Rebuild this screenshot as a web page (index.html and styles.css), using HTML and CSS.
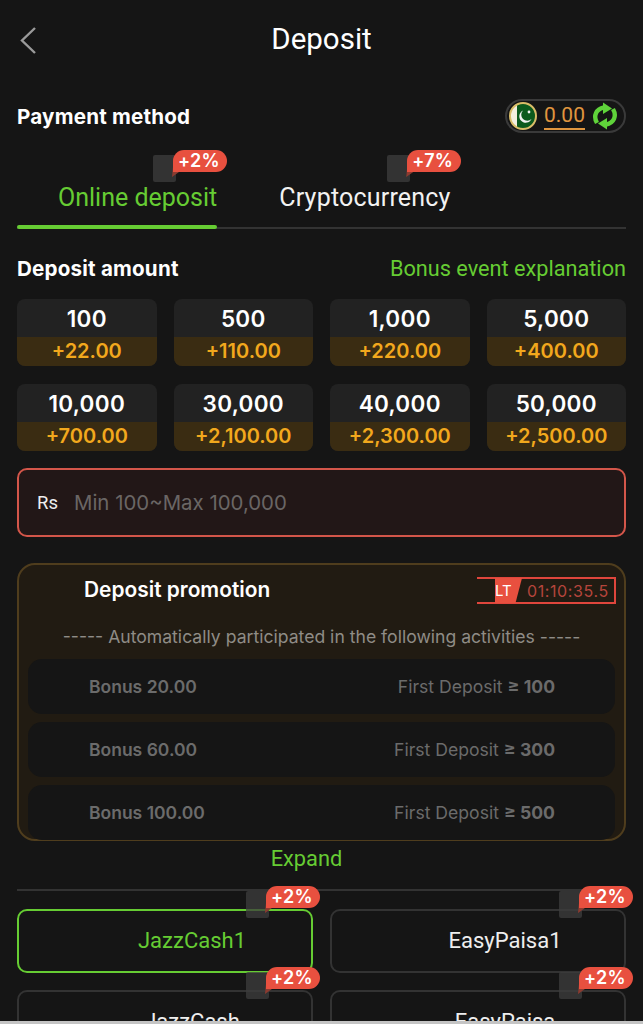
FILE: index.html
```html
<!DOCTYPE html>
<html lang="en">
<head>
  <meta charset="UTF-8">
  <meta name="viewport" content="width=device-width, initial-scale=1" />
  <title>Deposit</title>
  <link rel="stylesheet" href="styles.css">
</head>
<body>
<div id="page">
  <div id="header">
    <svg class="back-icon" width="20" height="30" viewBox="0 0 20 30"><path d="M17 3 L4 15.5 L17 28" fill="none" stroke="#9a9a9a" stroke-width="2.4"/></svg>
    <span class="header-title">Deposit</span>
  </div>

  <div class="row-between method-row">
    <span class="section-title">Payment method</span>
    <div class="balance">
      <svg class="flag" width="30" height="30" viewBox="0 0 30 30">
        <defs><clipPath id="flag-clip"><circle cx="15" cy="15" r="13"/></clipPath></defs>
        <g clip-path="url(#flag-clip)">
          <rect width="30" height="30" fill="#0c5a1d"/>
          <rect width="9" height="30" fill="#f3efdf"/>
        </g>
        <circle cx="15" cy="15" r="13" fill="none" stroke="#d9bd68" stroke-width="2"/>
        <path d="M15 9.5 A6.4 6.4 0 1 0 23.5 18 A5.6 5.6 0 0 1 15 9.5 Z" fill="#f2f2f2"/>
        <circle cx="21" cy="11" r="1.4" fill="#f2f2f2"/>
      </svg>
      <span class="balance-value">0.00</span>
      <svg class="refresh" width="26" height="28" viewBox="0 0 26 28">
        <path d="M5 21 C1 14 4 7 12 5.5" fill="none" stroke="#5fd33a" stroke-width="4.4"/>
        <path d="M11 0.5 L20 6.5 L11 12 Z" fill="#5fd33a"/>
        <path d="M21 7 C25 14 22 21 14 22.5" fill="none" stroke="#5fd33a" stroke-width="4.4"/>
        <path d="M15 16 L6 21.5 L15 27.5 Z" fill="#5fd33a"/>
      </svg>
    </div>
  </div>

  <div id="tabs">
    <div class="tab active">
      <span class="ribbon"><span class="ribbon-box"></span><span class="ribbon-fold"></span><span class="ribbon-tag">+2%</span></span>
      Online deposit
    </div>
    <div class="tab">
      <span class="ribbon"><span class="ribbon-box"></span><span class="ribbon-fold"></span><span class="ribbon-tag">+7%</span></span>
      Cryptocurrency
    </div>
  </div>

  <div class="row-between amount-row">
    <span class="section-title">Deposit amount</span>
    <span class="bonus-link">Bonus event explanation</span>
  </div>

  <div id="amounts">
    <div class="amount"><div class="amount-top">100</div><div class="amount-bonus">+22.00</div></div>
    <div class="amount"><div class="amount-top">500</div><div class="amount-bonus">+110.00</div></div>
    <div class="amount"><div class="amount-top">1,000</div><div class="amount-bonus">+220.00</div></div>
    <div class="amount"><div class="amount-top">5,000</div><div class="amount-bonus">+400.00</div></div>
    <div class="amount"><div class="amount-top">10,000</div><div class="amount-bonus">+700.00</div></div>
    <div class="amount"><div class="amount-top">30,000</div><div class="amount-bonus">+2,100.00</div></div>
    <div class="amount"><div class="amount-top">40,000</div><div class="amount-bonus">+2,300.00</div></div>
    <div class="amount"><div class="amount-top">50,000</div><div class="amount-bonus">+2,500.00</div></div>
  </div>

  <div id="amount-input">
    <span class="currency">Rs</span>
    <span class="placeholder">Min 100~Max 100,000</span>
  </div>

  <div id="promo">
    <div class="promo-head">
      <span class="promo-title">Deposit promotion</span>
      <div class="timer">
        <span class="timer-tag">LT</span>
        <span class="timer-value">01:10:35.5</span>
      </div>
    </div>
    <div class="promo-note"><span class="dashes">-----</span> Automatically participated in the following activities <span class="dashes">-----</span></div>
    <div class="promo-item"><span class="promo-bonus">Bonus 20.00</span><span class="promo-cond">First Deposit <b>≥ 100</b></span></div>
    <div class="promo-item"><span class="promo-bonus">Bonus 60.00</span><span class="promo-cond">First Deposit <b>≥ 300</b></span></div>
    <div class="promo-item"><span class="promo-bonus">Bonus 100.00</span><span class="promo-cond">First Deposit <b>≥ 500</b></span></div>
  </div>

  <div class="expand">Expand</div>

  <div id="channels">
    <div class="channel active">
      <span class="ribbon"><span class="ribbon-box"></span><span class="ribbon-fold"></span><span class="ribbon-tag">+2%</span></span>
      JazzCash1
    </div>
    <div class="channel">
      <span class="ribbon"><span class="ribbon-box"></span><span class="ribbon-fold"></span><span class="ribbon-tag">+2%</span></span>
      EasyPaisa1
    </div>
    <div class="channel">
      <span class="ribbon"><span class="ribbon-box"></span><span class="ribbon-fold"></span><span class="ribbon-tag">+2%</span></span>
      JazzCash
    </div>
    <div class="channel">
      <span class="ribbon"><span class="ribbon-box"></span><span class="ribbon-fold"></span><span class="ribbon-tag">+2%</span></span>
      EasyPaisa
    </div>
  </div>
</div>
</body>
</html>
```

FILE: styles.css
```css
html, body {
  margin: 0;
  height: 100%;
  background: #151515;
}
#page {
  height: 1024px;
  overflow: hidden;
  padding: 0 17px;
  box-sizing: border-box;
  background: #151515;
  border-bottom: 3px solid #c4c4c4;
  color: #fff;
  font-family: Inter, sans-serif;
}
#header {
  position: relative;
  height: 80px;
  display: flex;
  align-items: center;
  justify-content: center;
}
.back-icon {
  position: absolute;
  left: 1px;
  top: 25px;
}
.header-title {
  font-family: Roboto, sans-serif;
  font-size: 29.5px;
  line-height: 80px;
  margin-top: -2px;
}
.row-between {
  display: flex;
  justify-content: space-between;
  align-items: center;
}
.method-row {
  height: 34px;
  margin-top: 19px;
}
.section-title {
  font-size: 20.6px;
  font-weight: 700;
  letter-spacing: 0.2px;
}
.balance {
  width: 121px;
  height: 34px;
  box-sizing: border-box;
  border: 2px solid #3a3a3a;
  border-radius: 17px;
  display: flex;
  align-items: center;
  padding-left: 1px;
  gap: 6px;
}
.flag {
  flex: none;
}
.balance-value {
  color: #e0963f;
  font-family: Roboto, sans-serif;
  font-size: 21px;
  line-height: 25px;
  border-bottom: 2px solid #e0963f;
  width: 41px;
}
.refresh {
  flex: none;
  margin-left: 1px;
}
#tabs {
  display: flex;
  gap: 62px;
  height: 79px;
  padding-left: 41px;
  margin-top: 17px;
  position: relative;
  border-bottom: 2px solid #333;
  box-sizing: border-box;
}
.tab {
  position: relative;
  font-family: Roboto, sans-serif;
  font-size: 25px;
  padding-top: 32px;
  line-height: 32px;
  color: #f2f2f2;
}
.tab + .tab {
  letter-spacing: 0.2px;
}
.tab.active {
  color: #66cc33;
}
.tab.active::after {
  content: "";
  position: absolute;
  left: -41px;
  right: 0;
  bottom: -2px;
  height: 4px;
  border-radius: 2px;
  background: #66cc33;
}
.ribbon {
  position: absolute;
  display: block;
  width: 74px;
  height: 32px;
  letter-spacing: 0;
}
.tab .ribbon {
  left: 95px;
  top: 0;
}
.tab + .tab .ribbon {
  left: 108px;
}
.ribbon-box {
  position: absolute;
  left: 0;
  top: 5px;
  width: 23px;
  height: 27px;
  background: rgba(62, 62, 62, 0.75);
  border-radius: 2px;
}
.ribbon-fold {
  position: absolute;
  left: 19px;
  top: 6px;
  width: 7px;
  height: 21px;
  background: #8c3b30;
  clip-path: polygon(30% 0, 100% 0, 100% 76%, 0 100%);
}
.ribbon-tag {
  position: absolute;
  left: 20px;
  top: 0;
  width: 54px;
  height: 22px;
  box-sizing: border-box;
  padding-left: 5px;
  border-radius: 11px 11px 11px 0;
  background: #e8503f;
  font-family: Inter, sans-serif;
  font-size: 18px;
  font-weight: 600;
  letter-spacing: 0.3px;
  line-height: 22px;
  color: #fff;
  white-space: nowrap;
}
.amount-row {
  height: 30px;
  margin-top: 24px;
}
.bonus-link {
  font-size: 21.7px;
  color: #66cc33;
  font-family: Roboto, sans-serif;
}
#amounts {
  display: grid;
  grid-template-columns: repeat(4, 1fr);
  gap: 18px 17px;
  margin-top: 16px;
}
.amount {
  height: 67px;
  border-radius: 8px;
  overflow: hidden;
  background: #222;
  text-align: center;
}
.amount-top {
  height: 38px;
  font-size: 22.5px;
  font-weight: 600;
  letter-spacing: 0.3px;
  line-height: 39px;
}
.amount-bonus {
  height: 29px;
  background: #3a2c12;
  color: #f2a81d;
  font-size: 20px;
  font-weight: 600;
  line-height: 29px;
}
#amount-input {
  height: 69px;
  margin-top: 17px;
  box-sizing: border-box;
  border: 2px solid #d3564a;
  border-radius: 10px;
  background: #221717;
  display: flex;
  align-items: center;
  padding-left: 18px;
}
.currency {
  font-family: Roboto, sans-serif;
  font-size: 18.5px;
  color: #eee;
  width: 37px;
}
.placeholder {
  font-family: Inter, sans-serif;
  font-size: 20.4px;
  color: #6a6665;
}
#promo {
  height: 278px;
  margin-top: 26px;
  box-sizing: border-box;
  border: 2px solid #4f3d1d;
  border-radius: 18px;
  background: #211b12;
  padding: 0 9px;
}
.promo-head {
  position: relative;
  height: 48px;
  padding-left: 56px;
  display: flex;
  align-items: center;
}
.promo-title {
  font-size: 20.9px;
  font-weight: 600;
}
.timer {
  position: absolute;
  right: -1px;
  top: 12px;
  width: 139px;
  height: 27px;
  box-sizing: border-box;
  border: 2px solid #e0463c;
  border-left: none;
  display: flex;
  align-items: center;
}
.timer-tag {
  margin-left: 18px;
  width: 24px;
  height: 25px;
  background: #e8503f;
  clip-path: polygon(0 0, 100% 0, 76% 100%, 0 100%);
  padding-right: 3px;
  font-size: 15px;
  line-height: 25px;
  color: #fff;
}
.timer-value {
  margin-left: 5px;
  color: #b5453c;
  font-size: 16px;
  letter-spacing: 0.6px;
}
.promo-note {
  height: 45px;
  font-size: 17.6px;
  line-height: 45px;
  color: #8f8c86;
  text-align: center;
  white-space: nowrap;
  margin-top: 1px;
}
.promo-item {
  height: 55px;
  margin-bottom: 8px;
  border-radius: 14px;
  background: #151515;
  display: flex;
  justify-content: space-between;
  align-items: center;
  padding: 0 60px 0 61px;
  color: #6b6b6b;
}
.promo-bonus {
  font-size: 17.5px;
  font-weight: 600;
}
.promo-cond {
  font-size: 17.6px;
}
.promo-cond b {
  font-weight: 700;
}
.expand {
  text-align: center;
  color: #66cc33;
  font-family: Roboto, sans-serif;
  font-size: 21.8px;
  line-height: 34px;
  margin-top: 1px;
  padding-right: 30px;
  border-bottom: 2px solid #333;
  height: 49px;
  box-sizing: border-box;
}
#channels {
  display: grid;
  grid-template-columns: 1fr 1fr;
  gap: 17px 17px;
  margin-top: 18px;
}
.channel {
  position: relative;
  height: 64px;
  box-sizing: border-box;
  border: 2px solid #333;
  border-radius: 10px;
  font-family: Roboto, sans-serif;
  font-size: 22px;
  line-height: 60px;
  text-align: center;
  color: #eee;
  padding-left: 54px;
}
.channel.active {
  border-color: #66cc33;
  color: #66cc33;
}
.channel .ribbon {
  right: -9px;
  top: -25px;
  line-height: normal;
  text-align: left;
}
```
